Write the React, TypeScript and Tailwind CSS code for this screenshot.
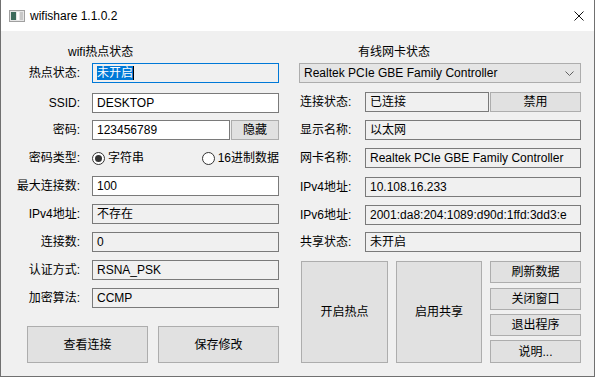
import type { ReactNode } from "react";

const btn = "bg-[#e1e1e1] border border-[#adadad] flex items-center justify-center";
const box = "h-[20px] border border-[#7a7a7a] px-[4px] flex items-center whitespace-nowrap overflow-hidden";

function LeftRow({ label, children, className = "" }: { label: string; children: ReactNode; className?: string }) {
  return (
    <div className={`flex items-center h-[20px] ${className}`}>
      <div className="w-[79px] text-right whitespace-nowrap">{label}</div>
      <div className="ml-[12px] flex items-center">{children}</div>
    </div>
  );
}

function RightRow({ label, children, className = "" }: { label: string; children: ReactNode; className?: string }) {
  return (
    <div className={`flex items-center h-[20px] ${className}`}>
      <div className="w-[66px] pl-[1px] whitespace-nowrap">{label}</div>
      <div className="flex items-center">{children}</div>
    </div>
  );
}

function Radio({ checked, label }: { checked?: boolean; label: string }) {
  return (
    <div className="flex items-center">
      <div className="w-[13px] h-[13px] rounded-full border border-[#333333] bg-white flex items-center justify-center">
        {checked && <div className="w-[7px] h-[7px] rounded-full bg-[#333333]" />}
      </div>
      <span className="ml-[3px] whitespace-nowrap">{label}</span>
    </div>
  );
}

function AppIcon() {
  return (
    <svg width="16" height="12" viewBox="0 0 16 12">
      <rect x="0.5" y="0.5" width="15" height="11" fill="#e6e6e6" stroke="#a0a0a0" />
      <rect x="2" y="2" width="5" height="8" fill="#3d6b5c" />
      <rect x="8" y="2" width="2" height="8" fill="#ffffff" />
      <rect x="11" y="2" width="3" height="8" fill="#c8c8c8" />
    </svg>
  );
}

export default function App() {
  return (
    <div className="w-[595px] h-[377px] flex flex-col border-x border-b border-[#707070] bg-[#f0f0f0] text-[12px] leading-none text-black font-['Liberation_Sans','Noto_Sans_CJK_SC',sans-serif] overflow-hidden">
      {/* title bar */}
      <div className="h-[31px] bg-white flex items-center pl-[8px] pr-[10px] shrink-0">
        <AppIcon />
        <span className="ml-[5px]">wifishare 1.1.0.2</span>
        <svg className="ml-auto" width="10" height="10" viewBox="0 0 10 10">
          <path d="M0.5 0.5 L9.5 9.5 M9.5 0.5 L0.5 9.5" stroke="#111" strokeWidth="1" />
        </svg>
      </div>

      <div className="flex-1 flex">
        {/* wifi hotspot */}
        <div className="w-[289px] flex flex-col pt-[11px]">
          <div className="h-[20px] flex items-center pl-[67px]">wifi热点状态</div>
          <LeftRow label="热点状态:" className="mt-[1px]">
            <div className={`${box} w-[187px] bg-[#f0f0f0] border-[#0078d7]`}>
              <span className="bg-[#0078d7] text-white h-[14px] flex items-center">未开启</span>
              <span className="w-[1px] h-[14px] bg-black" />
            </div>
          </LeftRow>
          <LeftRow label="SSID:" className="mt-[10px]">
            <div className={`${box} w-[187px] bg-white`}>DESKTOP</div>
          </LeftRow>
          <LeftRow label="密码:" className="mt-[7px]">
            <div className={`${box} w-[138px] bg-white`}>123456789</div>
            <div className={`${btn} ml-[1px] w-[48px] h-[20px]`}>隐藏</div>
          </LeftRow>
          <LeftRow label="密码类型:" className="mt-[8px]">
            <div className="w-[187px] flex items-center justify-between">
              <Radio checked label="字符串" />
              <Radio label="16进制数据" />
            </div>
          </LeftRow>
          <LeftRow label="最大连接数:" className="mt-[8px]">
            <div className={`${box} w-[187px] bg-white`}>100</div>
          </LeftRow>
          <LeftRow label="IPv4地址:" className="mt-[8px]">
            <div className={`${box} w-[187px] bg-[#f0f0f0]`}>不存在</div>
          </LeftRow>
          <LeftRow label="连接数:" className="mt-[8px]">
            <div className={`${box} w-[187px] bg-[#f0f0f0]`}>0</div>
          </LeftRow>
          <LeftRow label="认证方式:" className="mt-[8px]">
            <div className={`${box} w-[187px] bg-[#f0f0f0]`}>RSNA_PSK</div>
          </LeftRow>
          <LeftRow label="加密算法:" className="mt-[8px]">
            <div className={`${box} w-[187px] bg-[#f0f0f0]`}>CCMP</div>
          </LeftRow>
          <div className="flex mt-[18px] ml-[26px] gap-[10px]">
            <div className={`${btn} w-[121px] h-[37px]`}>查看连接</div>
            <div className={`${btn} w-[121px] h-[37px]`}>保存修改</div>
          </div>
        </div>

        {/* wired adapter */}
        <div className="flex-1 flex flex-col pt-[11px] pl-[9px]">
          <div className="h-[20px] flex items-center pl-[59px]">有线网卡状态</div>
          <div className="mt-[1px] w-[282px] h-[20px] bg-[#e5e5e5] border border-[#adadad] flex items-center pl-[4px] pr-[6px]">
            <span className="whitespace-nowrap">Realtek PCIe GBE Family Controller</span>
            <svg className="ml-auto" width="9" height="5" viewBox="0 0 9 5">
              <path d="M0.5 0.5 L4.5 4.5 L8.5 0.5" fill="none" stroke="#606060" strokeWidth="1" />
            </svg>
          </div>
          <RightRow label="连接状态:" className="mt-[9px]">
            <div className={`${box} w-[124px] bg-[#f0f0f0]`}>已连接</div>
            <div className={`${btn} ml-[1px] w-[91px] h-[20px]`}>禁用</div>
          </RightRow>
          <RightRow label="显示名称:" className="mt-[8px]">
            <div className={`${box} w-[216px] bg-[#f0f0f0]`}>以太网</div>
          </RightRow>
          <RightRow label="网卡名称:" className="mt-[8px]">
            <div className={`${box} w-[216px] bg-[#f0f0f0]`}>Realtek PCIe GBE Family Controller</div>
          </RightRow>
          <RightRow label="IPv4地址:" className="mt-[9px]">
            <div className={`${box} w-[216px] bg-[#f0f0f0]`}>10.108.16.233</div>
          </RightRow>
          <RightRow label="IPv6地址:" className="mt-[8px]">
            <div className={`${box} w-[216px] bg-[#f0f0f0]`}>2001:da8:204:1089:d90d:1ffd:3dd3:e</div>
          </RightRow>
          <RightRow label="共享状态:" className="mt-[7px]">
            <div className={`${box} w-[216px] bg-[#f0f0f0]`}>未开启</div>
          </RightRow>
          <div className="flex mt-[9px] ml-[2px] h-[102px]">
            <div className={`${btn} w-[87px]`}>开启热点</div>
            <div className={`${btn} w-[86px] ml-[8px]`}>启用共享</div>
            <div className="w-[91px] ml-[8px] flex flex-col">
              <div className={`${btn} h-[22px]`}>刷新数据</div>
              <div className={`${btn} h-[22px] mt-[5px]`}>关闭窗口</div>
              <div className={`${btn} h-[22px] mt-[4px]`}>退出程序</div>
              <div className={`${btn} h-[23px] mt-[4px]`}>说明...</div>
            </div>
          </div>
        </div>
      </div>
    </div>
  );
}
